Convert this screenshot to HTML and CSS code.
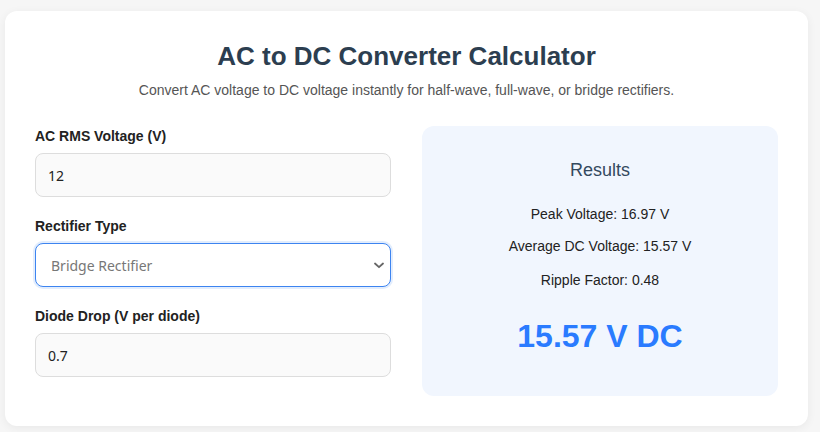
FILE: index.html
```html
<!DOCTYPE html>
<html lang="en">
<head>
<meta charset="utf-8">
<title>AC to DC Converter Calculator</title>
<link rel="stylesheet" href="styles.css">
</head>
<body>
<div class="card">
  <h1 class="title">AC to DC Converter Calculator</h1>
  <p class="subtitle">Convert AC voltage to DC voltage instantly for half-wave, full-wave, or bridge rectifiers.</p>
  <div class="grid">
    <div class="form">
      <label class="label">AC RMS Voltage (V)</label>
      <div class="field">12</div>
      <label class="label label-next">Rectifier Type</label>
      <div class="field select">
        <span>Bridge Rectifier</span>
        <svg class="chev" width="10" height="7" viewBox="0 0 10 7"><path d="M1 1.5 L5 5.2 L9 1.5" fill="none" stroke="#666" stroke-width="1.8" stroke-linecap="round" stroke-linejoin="round"/></svg>
      </div>
      <label class="label label-next">Diode Drop (V per diode)</label>
      <div class="field">0.7</div>
    </div>
    <div class="results">
      <h3 class="res-title">Results</h3>
      <p class="res-line first">Peak Voltage: 16.97 V</p>
      <p class="res-line">Average DC Voltage: 15.57 V</p>
      <p class="res-line third">Ripple Factor: 0.48</p>
      <div class="big">15.57 V DC</div>
    </div>
  </div>
</div>
</body>
</html>
```
FILE: styles.css
```css
html, body {
  margin: 0;
  padding: 0;
}
body {
  background: #f6f6f6;
  font-family: "Liberation Sans", Arial, sans-serif;
  padding: 11px 12px 7px 5px;
}
.card {
  background: #ffffff;
  border-radius: 12px;
  box-shadow: 0 2px 10px rgba(0, 0, 0, 0.06);
  padding: 30px;
}
.title {
  margin: 0;
  text-align: center;
  font-size: 26px;
  line-height: 30px;
  font-weight: bold;
  color: #2c3e50;
}
.subtitle {
  margin: 9px 0 26px;
  text-align: center;
  font-size: 14px;
  line-height: 20px;
  color: #555555;
}
.grid {
  display: grid;
  grid-template-columns: 1fr 1fr;
  gap: 31px;
  align-items: start;
}
.form {
  display: flex;
  flex-direction: column;
}
.label {
  display: block;
  font-size: 14px;
  line-height: 20px;
  font-weight: bold;
  color: #222222;
  margin-bottom: 7px;
}
.label-next {
  margin-top: 19px;
}
.field {
  box-sizing: border-box;
  height: 44px;
  border: 1px solid #dddddd;
  border-radius: 8px;
  background: #fafafa;
  padding: 0 12px;
  display: flex;
  align-items: center;
  font-family: "Noto Sans", "Open Sans", sans-serif;
  font-size: 14px;
  color: #222222;
}
.select {
  background: #ffffff;
  border: 1px solid #3d84f0;
  box-shadow: 0 0 0 2px rgba(61, 132, 240, 0.15);
  color: #777777;
  padding: 0 6px 0 15px;
  justify-content: space-between;
}
.chev {
  display: block;
}
.results {
  background: #f1f6fe;
  border-radius: 12px;
  padding: 33px 20px 41px;
  text-align: center;
}
.res-title {
  margin: 0;
  font-size: 18px;
  line-height: 22px;
  font-weight: normal;
  color: #34495e;
}
.res-line {
  margin: 12px 0 0;
  font-size: 14px;
  line-height: 20px;
  color: #222222;
}
.res-line.first {
  margin-top: 23px;
}
.res-line.third {
  margin-top: 14px;
}
.big {
  margin-top: 27px;
  font-size: 32px;
  line-height: 38px;
  font-weight: bold;
  color: #2a7bff;
}
```
